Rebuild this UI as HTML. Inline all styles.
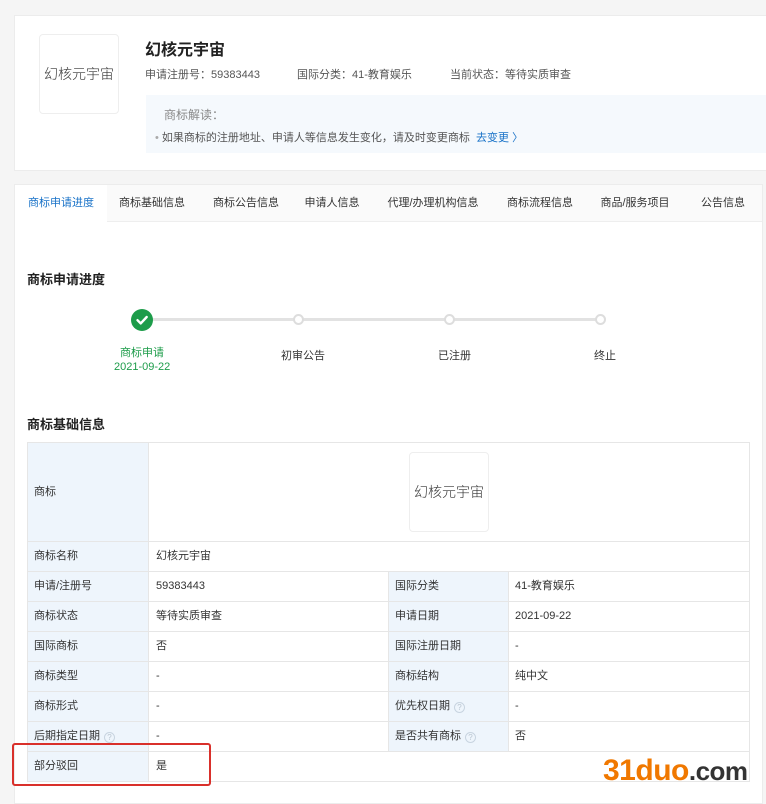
<!DOCTYPE html>
<html><head><meta charset="utf-8"><style>
*{margin:0;padding:0;box-sizing:border-box}
body{width:766px;height:797px;overflow:hidden;background:#f5f5f5;font-family:"Liberation Sans","Noto Sans CJK SC",sans-serif;font-size:11px;color:#333;position:relative}
.a{position:absolute;white-space:nowrap}
.card{position:absolute;background:#fff;border:1px solid #ececec}
.tab{position:absolute;top:184px;height:38px;line-height:38px;font-size:11px;color:#333;text-align:center}
.row{position:absolute;left:27px;width:723px;border-top:1px solid #e6e6e6;height:30px}
.c{position:absolute;top:0;height:29px;line-height:29px;padding-left:7px;font-size:11px;color:#333}
.l{background:#eef5fc}
.q{display:inline-block;width:11px;height:11px;border:1px solid #c8d4e0;border-radius:50%;font-size:8px;line-height:9px;text-align:center;color:#b8c4d0;margin-left:4px;vertical-align:-1px}
.dot{position:absolute;top:314px;width:11px;height:11px;border:2px solid #ddd;border-radius:50%;background:#fff}
.logo{font-family:"Noto Sans CJK SC",sans-serif;font-weight:300}
</style></head><body>
<div class="card" style="left:14px;top:15px;width:760px;height:156px"></div>
<div class="a logo" style="left:39px;top:34px;width:80px;height:80px;border:1px solid #eee;border-radius:4px;background:#fff;line-height:78px;text-align:center;font-size:14px;color:#333">幻核元宇宙</div>
<div class="a" style="left:145px;top:36px;font-size:16px;font-weight:bold;color:#222">幻核元宇宙</div>
<div class="a" style="left:145px;top:66px;color:#555">申请注册号：59383443</div>
<div class="a" style="left:297px;top:66px;color:#555">国际分类：41-教育娱乐</div>
<div class="a" style="left:450px;top:66px;color:#555">当前状态：等待实质审查</div>
<div class="a" style="left:146px;top:95px;width:620px;height:58px;background:#f5f9fd"></div>
<div class="a" style="left:164px;top:106px;font-size:12px;color:#888">商标解读：</div>
<div class="a" style="left:155px;top:129px;color:#555"><span style="color:#aaa">•</span> 如果商标的注册地址、申请人等信息发生变化，请及时变更商标 &nbsp;<span style="color:#1a73c8">去变更 〉</span></div>

<div class="card" style="left:14px;top:184px;width:749px;height:620px"></div>
<div class="a" style="left:15px;top:185px;width:747px;height:37px;background:#fafafa;border-bottom:1px solid #eee"></div>
<div class="a" style="left:15px;top:185px;width:92px;height:38px;background:#fff"></div>
<div class="tab" style="left:15px;width:92px;color:#1a73c8">商标申请进度</div>
<div class="tab" style="left:110px;width:84px">商标基础信息</div>
<div class="tab" style="left:204px;width:84px">商标公告信息</div>
<div class="tab" style="left:296px;width:72px">申请人信息</div>
<div class="tab" style="left:378px;width:110px">代理/办理机构信息</div>
<div class="tab" style="left:498px;width:84px">商标流程信息</div>
<div class="tab" style="left:592px;width:86px">商品/服务项目</div>
<div class="tab" style="left:690px;width:66px">公告信息</div>

<div class="a" style="left:27px;top:269px;font-size:13px;font-weight:bold;color:#222">商标申请进度</div>
<div class="a" style="left:150px;top:318px;width:452px;height:3px;background:#e2e2e2"></div>
<div class="a" style="left:131px;top:309px;width:22px;height:22px;border-radius:50%;background:#1d9c4a">
<svg width="22" height="22" viewBox="0 0 22 22" style="position:absolute;left:0;top:0"><path d="M6.5 11.2l3.2 3.2 6-6.4" stroke="#fff" stroke-width="2.4" fill="none" stroke-linecap="round" stroke-linejoin="round"/></svg></div>
<div class="dot" style="left:293px"></div>
<div class="dot" style="left:444px"></div>
<div class="dot" style="left:595px"></div>
<div class="a" style="left:120px;top:344px;color:#1d9c4a">商标申请</div>
<div class="a" style="left:114px;top:361px;color:#1d9c4a">2021-09-22</div>
<div class="a" style="left:281px;top:347px">初审公告</div>
<div class="a" style="left:438px;top:347px">已注册</div>
<div class="a" style="left:594px;top:347px">终止</div>

<div class="a" style="left:27px;top:414px;font-size:13px;font-weight:bold;color:#222">商标基础信息</div>

<div class="row" style="top:442px;height:100px"><div class="c l" style="left:0;width:121px;height:99px;line-height:99px">商标</div></div>
<div class="a logo" style="left:409px;top:452px;width:80px;height:80px;border:1px solid #eee;border-radius:4px;line-height:78px;text-align:center;font-size:14px">幻核元宇宙</div>
<div class="row" style="top:541px"><div class="c l" style="left:0;width:121px">商标名称</div><div class="c" style="left:122px">幻核元宇宙</div></div>
<div class="row" style="top:571px"><div class="c l" style="left:0;width:121px">申请/注册号</div><div class="c" style="left:122px">59383443</div><div class="c l" style="left:361px;width:120px">国际分类</div><div class="c" style="left:481px">41-教育娱乐</div></div>
<div class="row" style="top:601px"><div class="c l" style="left:0;width:121px">商标状态</div><div class="c" style="left:122px">等待实质审查</div><div class="c l" style="left:361px;width:120px">申请日期</div><div class="c" style="left:481px">2021-09-22</div></div>
<div class="row" style="top:631px"><div class="c l" style="left:0;width:121px">国际商标</div><div class="c" style="left:122px">否</div><div class="c l" style="left:361px;width:120px">国际注册日期</div><div class="c" style="left:481px">-</div></div>
<div class="row" style="top:661px"><div class="c l" style="left:0;width:121px">商标类型</div><div class="c" style="left:122px">-</div><div class="c l" style="left:361px;width:120px">商标结构</div><div class="c" style="left:481px">纯中文</div></div>
<div class="row" style="top:691px"><div class="c l" style="left:0;width:121px">商标形式</div><div class="c" style="left:122px">-</div><div class="c l" style="left:361px;width:120px">优先权日期<span class="q">?</span></div><div class="c" style="left:481px">-</div></div>
<div class="row" style="top:721px"><div class="c l" style="left:0;width:121px">后期指定日期<span class="q">?</span></div><div class="c" style="left:122px">-</div><div class="c l" style="left:361px;width:120px">是否共有商标<span class="q">?</span></div><div class="c" style="left:481px">否</div></div>
<div class="row" style="top:751px;border-bottom:1px solid #e6e6e6;height:31px"><div class="c l" style="left:0;width:121px">部分驳回</div><div class="c" style="left:122px">是</div></div>
<div class="a" style="left:27px;top:442px;width:723px;height:340px;border-left:1px solid #e6e6e6;border-right:1px solid #e6e6e6"></div>
<div class="a" style="left:148px;top:442px;width:1px;height:340px;background:#e6e6e6"></div>
<div class="a" style="left:388px;top:571px;width:1px;height:180px;background:#e6e6e6"></div>
<div class="a" style="left:508px;top:571px;width:1px;height:180px;background:#e6e6e6"></div>

<div class="a" style="left:12px;top:743px;width:199px;height:43px;border:2px solid #d9302b;border-radius:3px"></div>
<div class="a" style="left:603px;top:754px;font-size:30px;font-weight:bold;letter-spacing:-0.5px;color:#f07800">31duo<span style="color:#333;font-size:26px;font-weight:bold">.com</span></div>
</body></html>
